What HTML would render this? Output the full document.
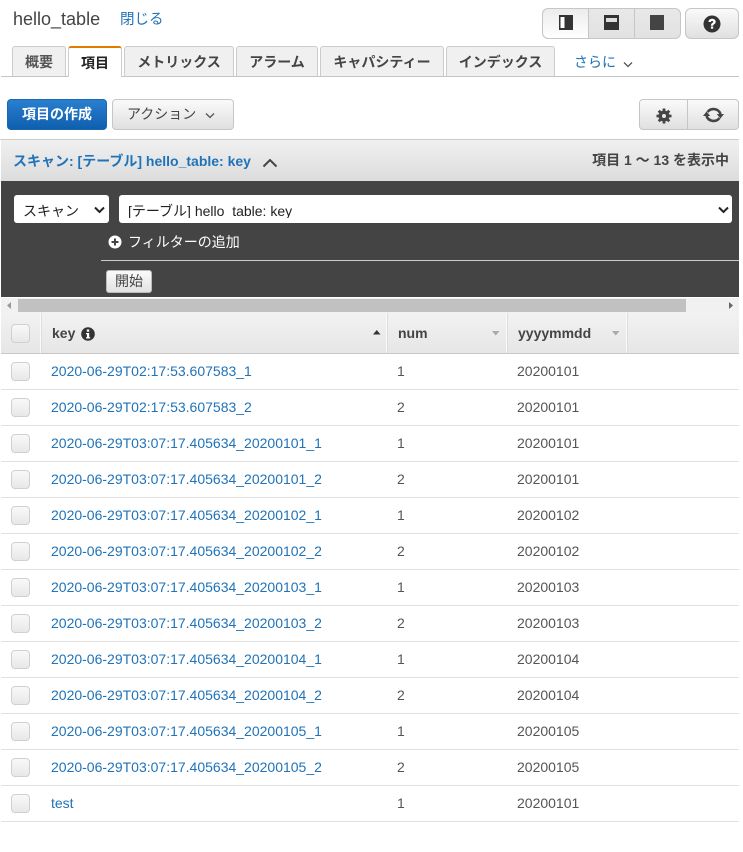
<!DOCTYPE html>
<html lang="ja"><head><meta charset="utf-8"><title>hello_table</title>
<style>
html,body{margin:0;padding:0;background:#fff}
body{width:743px;height:852px;position:relative;overflow:hidden;font-family:"Liberation Sans","Noto Sans CJK JP",sans-serif;color:#444;font-size:14px}
.a{position:absolute;white-space:pre}
.tab{position:absolute;top:46px;height:30px;box-sizing:border-box;border:1px solid #ccc;border-bottom:0;background:#f0f0f0;border-radius:3px 3px 0 0;text-align:center;font-weight:bold;font-size:14px;line-height:31px;color:#444;white-space:nowrap}
.btn{position:absolute;box-sizing:border-box;border:1px solid #c6c6c6;background:linear-gradient(#fafafa,#e0e0e0);border-radius:4px}
.div{position:absolute;top:0;bottom:0;width:1px;background:#c6c6c6}
.cb{position:absolute;left:11px;width:19px;height:19px;box-sizing:border-box;border:1px solid #d0d0d0;border-radius:4px;background:linear-gradient(#f9f9f9,#e8e8e8)}
.line{position:absolute;left:1px;width:738px;height:1px;background:#e1e1e1}
.k{position:absolute;left:51px;line-height:20px;color:#2073b8;font-size:14px;white-space:pre}
.n{position:absolute;left:397px;line-height:20px;color:#555;font-size:14px}
.d{position:absolute;left:517px;line-height:20px;color:#555;font-size:14px}
.th{position:absolute;top:324px;font-weight:bold;font-size:14px;line-height:18px;color:#444;white-space:pre}
.sep{position:absolute;top:313px;height:40px;width:2px;background:#fafafa;border-right:1px solid #ddd;box-sizing:border-box}
svg{position:absolute;display:block}
</style></head><body>

<div class="a" style="left:13px;top:8px;font-size:18px;line-height:22px;color:#444">hello_table</div>
<div class="a" style="left:120px;top:10px;font-size:14.5px;line-height:21px;color:#2073b8">閉じる</div>

<div class="btn" style="left:542px;top:8px;width:139px;height:31px;border-radius:6px;background:linear-gradient(#e8e8e8,#e2e2e2)">
 <div style="position:absolute;left:0;top:0;width:45px;height:29px;border-radius:6px 0 0 6px;background:linear-gradient(#ececec,#fff)"></div>
 <div class="div" style="left:45px"></div><div class="div" style="left:91px"></div>
</div>
<svg style="left:559px;top:15px" width="15" height="15"><rect width="14" height="15" fill="#333"/><rect x="1.500" y="2" width="4" height="11" fill="#fff"/></svg>
<svg style="left:604px;top:15px" width="16" height="15"><rect width="15" height="15" fill="#333"/><rect x="2" y="3" width="11" height="4" fill="#ddd"/></svg>
<svg style="left:650px;top:15px" width="14" height="15"><rect width="14" height="15" fill="#444"/></svg>
<div class="btn" style="left:685px;top:8px;width:54px;height:31px;border-radius:6px"></div>
<svg style="left:703px;top:15px" width="18" height="18" viewBox="0 0 18 18"><circle cx="9" cy="9" r="8.500" fill="#333"/><path d="M5.500 7c0-2 1.600-3.200 3.600-3.200S12.700 5 12.700 6.800c0 2.500-2.500 2.300-2.500 3.900H7.900c0-2.800 2.300-2.600 2.300-3.800 0-.6-.5-1-1.100-1s-1.200.4-1.200 1.100z" fill="#fff"/><rect x="7.900" y="11.500" width="2.300" height="2.200" fill="#fff"/></svg>

<div style="position:absolute;left:1px;top:76px;width:738px;height:1px;background:#c4c4c4"></div>
<div class="tab" style="left:12px;width:54px;color:#555">概要</div>
<div class="tab" style="left:68px;width:54px;height:31px;background:#fff;border-top:2px solid #e07b00;color:#222;line-height:31px">項目</div>
<div class="tab" style="left:124px;width:110px">メトリックス</div>
<div class="tab" style="left:236px;width:82px">アラーム</div>
<div class="tab" style="left:320px;width:124px">キャパシティー</div>
<div class="tab" style="left:446px;width:109px">インデックス</div>
<div class="a" style="left:574px;top:52px;font-size:14px;line-height:21px;color:#2073b8">さらに</div>
<svg style="left:623px;top:61px" width="10" height="8"><path d="M1 1.500 5 5.500 9 1.500" fill="none" stroke="#555" stroke-width="1.300"/></svg>

<div style="position:absolute;left:7px;top:99px;width:100px;height:31px;box-sizing:border-box;border:1px solid #1a69b0;border-radius:4px;background:linear-gradient(#2a7fd0,#0f5fae);color:#fff;font-weight:bold;font-size:14px;line-height:29px;text-align:center">項目の作成</div>
<div class="btn" style="left:112px;top:99px;width:122px;height:31px"></div>
<div class="a" style="left:127px;top:104px;font-size:14px;line-height:21px;color:#444">アクション</div>
<svg style="left:205px;top:112px" width="10" height="8"><path d="M1 1.500 5 5.500 9 1.500" fill="none" stroke="#555" stroke-width="1.300"/></svg>

<div class="btn" style="left:639px;top:99px;width:100px;height:31px"><div class="div" style="left:47px"></div></div>
<svg style="left:655.500px;top:107.500px" width="16" height="16" viewBox="0 0 16 16"><circle cx="8" cy="8" r="5.500" fill="#444"/><g stroke="#444" stroke-width="2.800"><path d="M8 .5v15M.5 8h15M2.700 2.700l10.600 10.600M13.300 2.700 2.700 13.300"/></g><circle cx="8" cy="8" r="2" fill="#e8e8e8"/></svg>
<svg style="left:703px;top:106px" width="21" height="18" viewBox="0 0 21 18"><path d="M4.500 6A7.500 7.500 0 0 1 17.500 8M16.500 12A7.500 7.500 0 0 1 3.500 10" fill="none" stroke="#444" stroke-width="2.600"/><path d="M13.800 8H21L17.400 12.500zM0 10H7.200L3.600 5.500z" fill="#444"/></svg>

<div style="position:absolute;left:0;top:139px;width:739px;height:1px;background:#ccc"></div>
<div style="position:absolute;left:1px;top:140px;width:738px;height:41px;background:linear-gradient(#f0f0f0,#dcdcdc)"></div>
<div class="a" style="left:13px;top:151px;font-size:14px;font-weight:bold;line-height:20px;color:#2073b8">スキャン: [テーブル] hello_table: key</div>
<svg style="left:262px;top:157px" width="16" height="11"><path d="M1.500 9.500 8 3l6.500 6.500" fill="none" stroke="#444" stroke-width="2"/></svg>
<div class="a" style="right:14px;top:150px;font-size:14px;font-weight:bold;line-height:20px;color:#444">項目 1 ～ 13 を表示中</div>

<div style="position:absolute;left:1px;top:181px;width:738px;height:116px;background:#444"></div>
<div style="position:absolute;left:14px;top:195px;width:95px;height:28px;background:#fff;border-radius:3px"></div>
<div class="a" style="left:23px;top:201px;font-size:14px;line-height:21px;color:#222">スキャン</div>
<svg style="left:94px;top:206px" width="11" height="8"><path d="M1 1.500 5.500 6 10 1.500" fill="none" stroke="#222" stroke-width="2"/></svg>
<div style="position:absolute;left:119px;top:195px;width:613px;height:28px;background:#fff;border-radius:3px"></div>
<div class="a" style="left:128px;top:201px;font-size:14px;line-height:20px;color:#222;height:17px;overflow:hidden">[テーブル] hello_table: key</div>
<svg style="left:718px;top:206px" width="11" height="8"><path d="M1 1.500 5.500 6 10 1.500" fill="none" stroke="#222" stroke-width="2"/></svg>
<svg style="left:108px;top:235px" width="14" height="14" viewBox="0 0 14 14"><circle cx="7" cy="7" r="6.500" fill="#fff"/><path d="M7 3.500v7M3.500 7h7" stroke="#444" stroke-width="2"/></svg>
<div class="a" style="left:128px;top:232px;font-size:14px;line-height:21px;color:#fff">フィルターの追加</div>
<div style="position:absolute;left:101px;top:260px;width:638px;height:1px;background:#ccc"></div>
<div style="position:absolute;left:106px;top:270px;width:46px;height:23px;box-sizing:border-box;border:1px solid #bbb;border-radius:3px;background:linear-gradient(#fafafa,#e2e2e2);text-align:center;font-size:14px;line-height:20px;color:#444">開始</div>

<div style="position:absolute;left:1px;top:298px;width:738px;height:15px;background:#f1f1f1"></div>
<div style="position:absolute;left:18px;top:299px;width:668px;height:13px;background:#c1c1c1"></div>
<svg style="left:7px;top:302px" width="5" height="7"><path d="M4 0v7L0 3.500z" fill="#999"/></svg>
<svg style="left:729px;top:302px" width="5" height="7"><path d="M0 0v7l4-3.500z" fill="#666"/></svg>

<div style="position:absolute;left:1px;top:313px;width:738px;height:40px;background:linear-gradient(#f2f2f2,#e6e6e6)"></div>
<div style="position:absolute;left:1px;top:353px;width:738px;height:1px;background:#c8c8c8"></div>
<div class="sep" style="left:40px"></div><div class="sep" style="left:386px"></div><div class="sep" style="left:506px"></div><div class="sep" style="left:626px"></div>
<div class="cb" style="top:324px"></div>
<div class="th" style="left:52px">key</div>
<svg style="left:81px;top:327px" width="14" height="14" viewBox="0 0 14 14"><circle cx="7" cy="7" r="6.800" fill="#333"/><rect x="5.800" y="2.500" width="2.400" height="2.200" fill="#fff"/><path d="M5 6h3.200v4.300H9.200v1.200H5v-1.200h1V7.200H5z" fill="#fff"/></svg>
<svg style="left:373px;top:330px" width="8" height="5"><path d="M0 4.500h7.500L3.750 0z" fill="#333"/></svg>
<div class="th" style="left:398px">num</div>
<svg style="left:492px;top:331px" width="8" height="5"><path d="M0 0h7.500L3.750 4.500z" fill="#aaa"/></svg>
<div class="th" style="left:518px">yyyymmdd</div>
<svg style="left:612px;top:331px" width="8" height="5"><path d="M0 0h7.500L3.750 4.500z" fill="#aaa"/></svg>

<div class="cb" style="top:362px"></div><div class="k" style="top:361px">2020-06-29T02:17:53.607583_1</div><div class="n" style="top:361px">1</div><div class="d" style="top:361px">20200101</div><div class="line" style="top:389px"></div>
<div class="cb" style="top:398px"></div><div class="k" style="top:397px">2020-06-29T02:17:53.607583_2</div><div class="n" style="top:397px">2</div><div class="d" style="top:397px">20200101</div><div class="line" style="top:425px"></div>
<div class="cb" style="top:434px"></div><div class="k" style="top:433px">2020-06-29T03:07:17.405634_20200101_1</div><div class="n" style="top:433px">1</div><div class="d" style="top:433px">20200101</div><div class="line" style="top:461px"></div>
<div class="cb" style="top:470px"></div><div class="k" style="top:469px">2020-06-29T03:07:17.405634_20200101_2</div><div class="n" style="top:469px">2</div><div class="d" style="top:469px">20200101</div><div class="line" style="top:497px"></div>
<div class="cb" style="top:506px"></div><div class="k" style="top:505px">2020-06-29T03:07:17.405634_20200102_1</div><div class="n" style="top:505px">1</div><div class="d" style="top:505px">20200102</div><div class="line" style="top:533px"></div>
<div class="cb" style="top:542px"></div><div class="k" style="top:541px">2020-06-29T03:07:17.405634_20200102_2</div><div class="n" style="top:541px">2</div><div class="d" style="top:541px">20200102</div><div class="line" style="top:569px"></div>
<div class="cb" style="top:578px"></div><div class="k" style="top:577px">2020-06-29T03:07:17.405634_20200103_1</div><div class="n" style="top:577px">1</div><div class="d" style="top:577px">20200103</div><div class="line" style="top:605px"></div>
<div class="cb" style="top:614px"></div><div class="k" style="top:613px">2020-06-29T03:07:17.405634_20200103_2</div><div class="n" style="top:613px">2</div><div class="d" style="top:613px">20200103</div><div class="line" style="top:641px"></div>
<div class="cb" style="top:650px"></div><div class="k" style="top:649px">2020-06-29T03:07:17.405634_20200104_1</div><div class="n" style="top:649px">1</div><div class="d" style="top:649px">20200104</div><div class="line" style="top:677px"></div>
<div class="cb" style="top:686px"></div><div class="k" style="top:685px">2020-06-29T03:07:17.405634_20200104_2</div><div class="n" style="top:685px">2</div><div class="d" style="top:685px">20200104</div><div class="line" style="top:713px"></div>
<div class="cb" style="top:722px"></div><div class="k" style="top:721px">2020-06-29T03:07:17.405634_20200105_1</div><div class="n" style="top:721px">1</div><div class="d" style="top:721px">20200105</div><div class="line" style="top:749px"></div>
<div class="cb" style="top:758px"></div><div class="k" style="top:757px">2020-06-29T03:07:17.405634_20200105_2</div><div class="n" style="top:757px">2</div><div class="d" style="top:757px">20200105</div><div class="line" style="top:785px"></div>
<div class="cb" style="top:794px"></div><div class="k" style="top:793px">test</div><div class="n" style="top:793px">1</div><div class="d" style="top:793px">20200101</div><div class="line" style="top:821px"></div>
</body></html>
